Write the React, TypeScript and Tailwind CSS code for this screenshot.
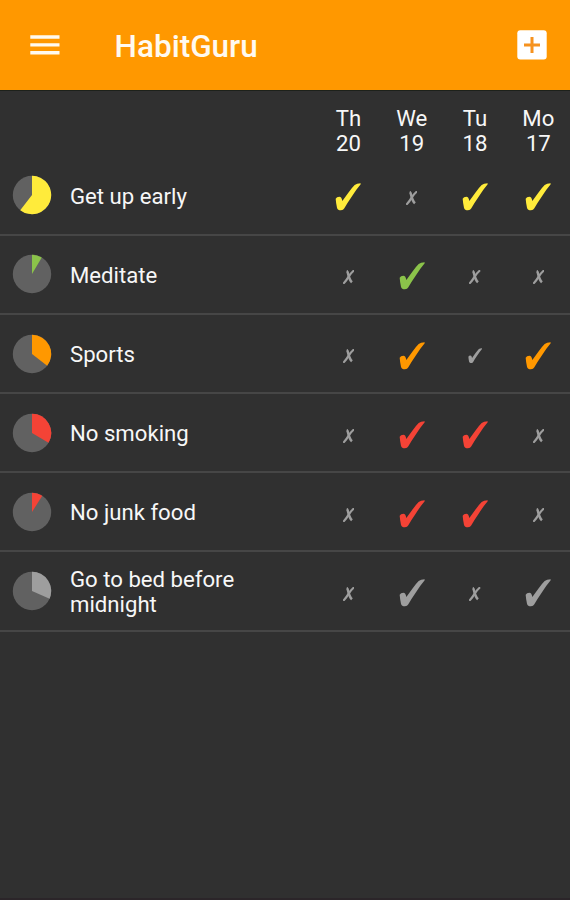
import React from "react";

type Mark = "x" | "done" | "implied";

interface Habit {
  name: string;
  color: string;
  percent: number;
  marks: Mark[];
}

const days = [
  ["Th", "20"],
  ["We", "19"],
  ["Tu", "18"],
  ["Mo", "17"],
];

const habits: Habit[] = [
  { name: "Get up early", color: "#ffeb3b", percent: 60.5, marks: ["done", "x", "done", "done"] },
  { name: "Meditate", color: "#8bc34a", percent: 8.5, marks: ["x", "done", "x", "x"] },
  { name: "Sports", color: "#ff9800", percent: 35.5, marks: ["x", "done", "implied", "done"] },
  { name: "No smoking", color: "#f44336", percent: 33.5, marks: ["x", "done", "done", "x"] },
  { name: "No junk food", color: "#f44336", percent: 9, marks: ["x", "done", "done", "x"] },
  { name: "Go to bed before midnight", color: "#9e9e9e", percent: 31.5, marks: ["x", "done", "x", "done"] },
];

function Pie({ percent, color }: { percent: number; color: string }) {
  const angle = (percent / 100) * Math.PI * 2;
  const x = 20 + 19.2 * Math.sin(angle);
  const y = 20 - 19.2 * Math.cos(angle);
  return (
    <svg viewBox="0 0 40 40" className="ml-3 h-10 w-10 shrink-0">
      <circle cx="20" cy="20" r="19.2" fill="#616161" />
      <path d={`M20 20V.8A19.2 19.2 0 ${percent > 50 ? 1 : 0} 1 ${x} ${y}Z`} fill={color} />
    </svg>
  );
}

function Check({ color, className }: { color: string; className: string }) {
  return (
    <svg viewBox="0 0 78 84" className={className} fill={color}>
      <path d="M77 1Q65 1 59 6Q50 15 40 29L22 54Q20 41 13 41Q5 41 2 47Q3 61 6 74Q8 82 18 82Q25 82 28 76Q38 58 50 41Q62 22 77 4Z" />
    </svg>
  );
}

function Cross() {
  return (
    <svg viewBox="0 0 34 43" className="mt-1.5 h-[14.3px] w-[11.3px]" fill="none" stroke="#9e9e9e">
      <path d="M31 3Q24 9 17 20Q10 32 3 39" strokeWidth="6.5" strokeLinecap="round" />
      <path d="M11 3Q14 4 16 14Q20 31 27 37" strokeWidth="7.5" />
    </svg>
  );
}

export default function App() {
  return (
    <div className="flex h-[900px] w-[570px] flex-col overflow-hidden border-b-2 border-[#2b2529] bg-[#303030] font-['Roboto',sans-serif] text-[22.16px] leading-[25.3px] text-[#f7f7f7]">
      <header className="flex h-[90px] shrink-0 items-center bg-[#ff9800] pr-[23px] pl-[30px]">
        <svg viewBox="0 0 30 20" className="h-5 w-[30px]" fill="#fffaf0">
          <path d="M.3 .3h29.2v3.4H.3zM.3 8.2h29.2v3.4H.3zM.3 16.1h29.2v3.4H.3z" />
        </svg>
        <h1 className="ml-[54.6px] pt-[3px] text-[31.5px] font-medium text-[#fffaf0]">HabitGuru</h1>
        <svg viewBox="0 0 30 30" className="ml-auto h-[30px] w-[30px]">
          <rect x=".3" y=".2" width="29.4" height="29.4" rx="3" fill="#fff" />
          <path d="M15 7v16M7 15h16" stroke="#f6921e" strokeWidth="3" />
        </svg>
      </header>
      <main className="flex flex-col border-t border-[#1d211b]">
        <div className="flex h-[65.7px] justify-end pt-[15px]">
          {days.map(([day, date]) => (
            <div key={date} className="w-[63.3px] text-center">
              <div>{day}</div>
              <div>{date}</div>
            </div>
          ))}
        </div>
        {habits.map((habit) => (
          <div key={habit.name} className="flex h-[79.15px] items-center border-b-2 border-[#464646]">
            <Pie percent={habit.percent} color={habit.color} />
            <div className="ml-[18px] w-[200px] pt-[2px]">{habit.name}</div>
            <div className="ml-auto flex">
              {habit.marks.map((mark, i) => (
                <div key={i} className="flex h-10 w-[63.3px] items-center justify-center">
                  {mark === "x" && <Cross />}
                  {mark === "done" && <Check color={habit.color} className="mt-1 h-7 w-[26px]" />}
                  {mark === "implied" && <Check color="#9e9e9e" className="mt-1 h-[15.5px] w-[14.4px]" />}
                </div>
              ))}
            </div>
          </div>
        ))}
      </main>
    </div>
  );
}
